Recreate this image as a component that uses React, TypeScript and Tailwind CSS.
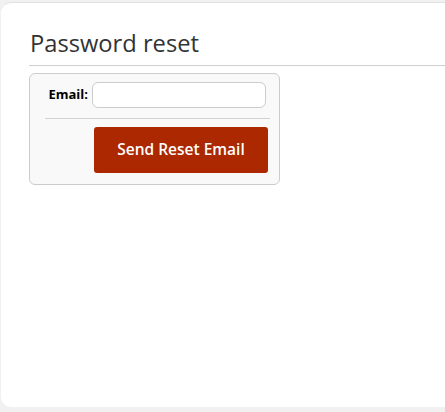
export default function App() {
  return (
    <div className="h-[412px] w-[445px] overflow-hidden bg-[#f0f1f0] pt-[2px] pl-px" style={{ fontFamily: '"Open Sans", "Noto Sans", sans-serif' }}>
      <div className="h-[405px] w-[460px] rounded-l-[10px] border-t border-[#e2e2e2] bg-white pl-[28px] pt-[25px]">
        <h1 className="text-[23.7px] leading-[31px] text-[#333] pl-px">Password reset</h1>
        <div className="mt-[6px] border-t border-[#cfcfcf]" />
        <div className="mt-[7px] w-[251px] rounded-[6px] border border-[#cccccc] bg-[#f9f9f9] pl-[15px] pr-[11px] pt-[8px] pb-[11px]">
          <div className="flex items-center justify-end pr-[2px]">
            <label className="mr-[4px] text-[13px] font-bold text-black">Email:</label>
            <input className="h-[26px] w-[174px] rounded-[6px] border border-[#cccccc] bg-white" type="text" />
          </div>
          <div className="mt-[10px] -mr-[2px] border-t border-[#d2d2d2]" />
          <div className="mt-[8px] flex justify-end">
            <button className="h-[46px] w-[174px] rounded-[3px] bg-[#ab2800] text-[15.5px] font-semibold text-white">
              Send Reset Email
            </button>
          </div>
        </div>
      </div>
    </div>
  );
}
